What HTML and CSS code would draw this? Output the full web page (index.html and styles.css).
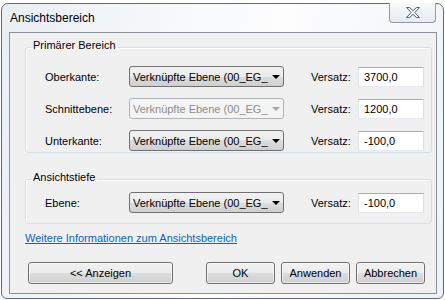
FILE: index.html
```html
<!DOCTYPE html>
<html>
<head>
  <title>Ansichtsbereich</title>
  <link rel="stylesheet" href="styles.css">
</head>
<body>
  <div class="window">
    <div class="titlebar">
      <span class="title">Ansichtsbereich</span>
      <div class="close-button">
        <svg width="14" height="11" viewBox="0 0 14 11">
          <polygon points="0.5,0.5 3.5,0.5 7,3.6 10.5,0.5 13.5,0.5 8.8,5.5 13.5,10.5 10.5,10.5 7,7.4 3.5,10.5 0.5,10.5 5.2,5.5" fill="#eef1f4" stroke="#566170" stroke-width="1" stroke-linejoin="round"/>
        </svg>
      </div>
    </div>

    <div class="client">
      <fieldset class="group group-primary">
        <legend>Primärer Bereich</legend>
        <div class="group-body">
          <div class="row">
            <span class="row-label">Oberkante:</span>
            <div class="combo"><span class="combo-text">Verknüpfte Ebene (00_EG_Innen)</span><span class="combo-arrow"></span></div>
            <span class="offset-label">Versatz:</span>
            <input class="offset-input" type="text" value="3700,0">
          </div>
          <div class="row">
            <span class="row-label">Schnittebene:</span>
            <div class="combo combo-disabled"><span class="combo-text">Verknüpfte Ebene (00_EG_Innen)</span><span class="combo-arrow"></span></div>
            <span class="offset-label">Versatz:</span>
            <input class="offset-input" type="text" value="1200,0">
          </div>
          <div class="row">
            <span class="row-label">Unterkante:</span>
            <div class="combo"><span class="combo-text">Verknüpfte Ebene (00_EG_Innen)</span><span class="combo-arrow"></span></div>
            <span class="offset-label">Versatz:</span>
            <input class="offset-input" type="text" value="-100,0">
          </div>
        </div>
      </fieldset>

      <fieldset class="group group-depth">
        <legend>Ansichtstiefe</legend>
        <div class="group-body">
          <div class="row">
            <span class="row-label">Ebene:</span>
            <div class="combo"><span class="combo-text">Verknüpfte Ebene (00_EG_Innen)</span><span class="combo-arrow"></span></div>
            <span class="offset-label">Versatz:</span>
            <input class="offset-input" type="text" value="-100,0">
          </div>
        </div>
      </fieldset>

      <a class="more-info" href="#">Weitere Informationen zum Ansichtsbereich</a>

      <div class="button-row">
        <button class="dialog-button show-button">&lt;&lt; Anzeigen</button>
        <div class="button-group">
          <button class="dialog-button">OK</button>
          <button class="dialog-button">Anwenden</button>
          <button class="dialog-button">Abbrechen</button>
        </div>
      </div>
    </div>
  </div>
</body>
</html>
```

FILE: styles.css
```css
body {
  margin: 0;
  background-color: #fff;
  font-family: "Liberation Sans", Arial, sans-serif;
  font-size: 11px;
  color: #000;
}

.window {
  box-sizing: border-box;
  width: 443px;
  height: 296px;
  margin: 3px 0 0 1px;
  padding: 0 6px 4px 7px;
  border: 1px solid #5f6b78;
  border-radius: 7px 7px 6px 6px;
  background: linear-gradient(105deg, #e9eef3 0%, #f7f9fb 35%, #fdfdfe 55%, #eef2f6 100%);
  display: flex;
  flex-direction: column;
}

.titlebar {
  height: 28px;
  display: flex;
  align-items: flex-start;
  flex-shrink: 0;
}

.title {
  margin: 6px 0 0 1px;
  line-height: 16px;
  font-size: 12px;
}

.close-button {
  box-sizing: border-box;
  width: 47px;
  height: 20px;
  margin: -1px 1px 0 auto;
  border: 1px solid #8e9aa7;
  border-top: none;
  border-radius: 0 0 4px 4px;
  background: linear-gradient(#f7f9fa, #e7ebef);
  display: flex;
  align-items: center;
  justify-content: center;
}

.client {
  box-sizing: border-box;
  height: 262px;
  padding: 0 4px 0 15px;
  border: 1px solid #8a9098;
  background-color: #f0f0f0;
  display: flex;
  flex-direction: column;
}

.group {
  margin: 0;
  padding: 0;
  border: 1px solid #d5dfe5;
  border-radius: 3px;
  box-shadow: inset 1px 1px 0 #fff;
  min-width: 0;
}

.group legend {
  margin-left: 5px;
  padding: 0 2px 4px;
  line-height: 16px;
}

.group-body {
  padding: 9px 7px 1px 19px;
}

.group-primary {
  margin-top: 4px;
}

.group-depth {
  margin-top: 16px;
}

.group-depth .group-body {
  padding-top: 3px;
  padding-bottom: 10px;
}

.row {
  display: flex;
  align-items: center;
  height: 21px;
}

.row + .row {
  margin-top: 11px;
}

.row-label {
  width: 84px;
}

.combo {
  box-sizing: border-box;
  width: 155px;
  height: 21px;
  border: 1px solid #707070;
  border-radius: 3px;
  background: linear-gradient(#f2f2f2 0%, #ebebeb 50%, #dddddd 50%, #cfcfcf 100%);
  display: flex;
  align-items: center;
}

.combo-text {
  width: 135px;
  padding-left: 3px;
  overflow: hidden;
  white-space: nowrap;
}

.combo-arrow {
  margin-left: 4px;
  width: 0;
  height: 0;
  border-left: 4px solid transparent;
  border-right: 4px solid transparent;
  border-top: 4px solid #000;
}

.combo-disabled {
  border-color: #adb2b5;
  background: #f4f4f4;
  color: #8d8d8d;
}

.combo-disabled .combo-arrow {
  border-top-color: #a6a6a6;
}

.offset-label {
  margin-left: 27px;
  width: 47px;
}

.offset-input {
  box-sizing: border-box;
  width: 66px;
  height: 20px;
  margin: 0;
  padding: 0 0 0 5px;
  border: 1px solid;
  border-color: #abadb3 #dbdfe6 #e3e9ef #e2e3ea;
  background-color: #fff;
  font-family: inherit;
  font-size: 11px;
  color: #000;
}

.more-info {
  margin-top: 6px;
  line-height: 16px;
  color: #0066cc;
  align-self: flex-start;
}

.button-row {
  margin-top: 16px;
  padding: 0 7px 0 3px;
  display: flex;
}

.button-group {
  margin-left: auto;
  display: flex;
  gap: 6px;
}

.dialog-button {
  box-sizing: border-box;
  width: 69px;
  height: 22px;
  padding: 0;
  border: 1px solid #707070;
  border-radius: 3px;
  background: linear-gradient(#f2f2f2 0%, #ebebeb 50%, #dddddd 50%, #cfcfcf 100%);
  box-shadow: inset 0 0 0 1px rgba(255, 255, 255, 0.6);
  font-family: inherit;
  font-size: 11px;
  color: #000;
}

.show-button {
  width: 145px;
}
```
